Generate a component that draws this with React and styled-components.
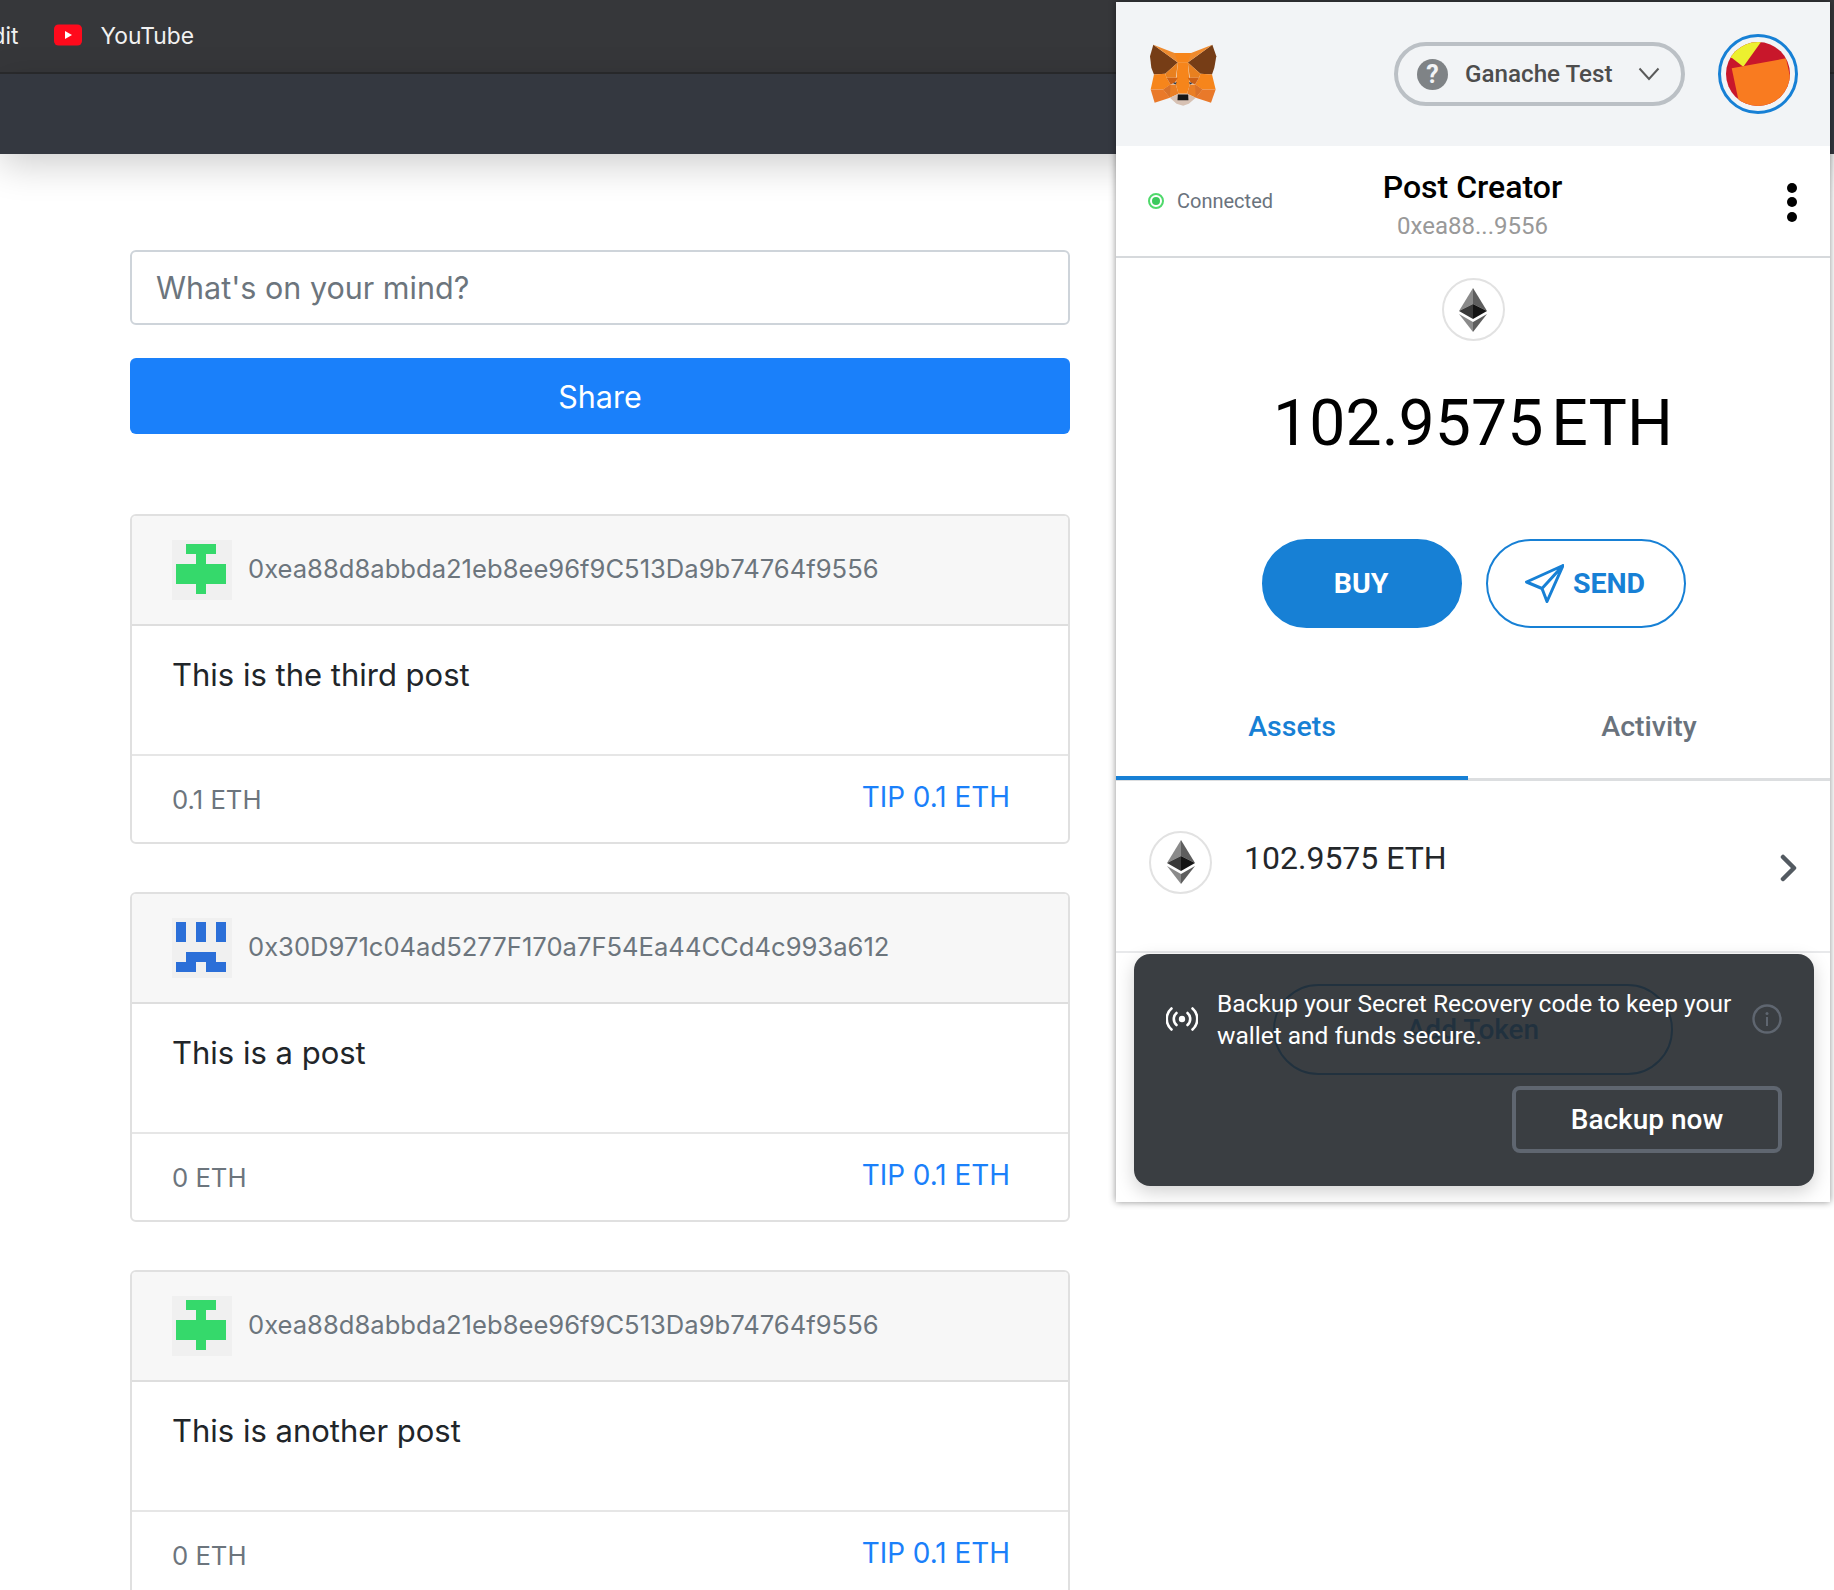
import React from "react";
import styled, { createGlobalStyle } from "styled-components";

const Global = createGlobalStyle`
  html, body { margin: 0; padding: 0; background: #fff; }
  body { width: 1834px; height: 1590px; overflow: hidden; font-family: Inter, "Liberation Sans", sans-serif; }
  * { box-sizing: border-box; }
`;

const Page = styled.div`position: relative; width: 1834px; height: 1590px; overflow: hidden; background: #fff;`;
const BookmarksBar = styled.div`
  height: 74px; background: #36373a; border-bottom: 2px solid #2a2b2d;
  display: flex; align-items: center; gap: 35px; margin-left: -50px; padding-bottom: 2px;
`;
const Bookmark = styled.div`display: flex; align-items: center; gap: 19px; color: #f1f1f1; font-size: 22.8px; white-space: nowrap;`;
const NavBar = styled.div`height: 80px; background: #343840; box-shadow: 0 10px 38px rgba(0,0,0,.2); position: relative;`;
const Feed = styled.main`width: 940px; margin-left: 130px; padding-top: 96px; display: flex; flex-direction: column;`;
const PostInput = styled.div`
  height: 75px; border: 2px solid #ced4da; border-radius: 6px; padding-left: 24px;
  display: flex; align-items: center; color: #6c757d; font-size: 30.5px;
`;
const ShareButton = styled.div`
  height: 76px; margin-top: 33px; margin-bottom: 80px; background: #1a80fa; border-radius: 6px; color: #fff;
  display: flex; align-items: center; justify-content: center; font-size: 30.5px;
`;
const Card = styled.article`
  height: 330px; margin-bottom: 48px; border: 2px solid #e0e0e0; border-radius: 6px; overflow: hidden; flex-shrink: 0;
  display: flex; flex-direction: column;
`;
const CardHeader = styled.header`
  height: 110px; background: #f7f7f7; border-bottom: 2px solid #dedede; padding-left: 40px;
  display: flex; align-items: center; gap: 16px; flex-shrink: 0;
`;
const Address = styled.span`color: #6c757d; font-size: 25.6px; white-space: nowrap; margin-top: -3px;`;
const CardBody = styled.div`height: 130px; padding: 30px 40px 0; font-size: 31px; color: #212529; border-bottom: 2px solid #e6e6e6; flex-shrink: 0;`;
const CardFooter = styled.footer`flex: 1; display: flex; align-items: center; justify-content: space-between; padding: 0 58px 0 40px;`;
const Amount = styled.span`color: #6c757d; font-size: 25.7px;`;
const TipLink = styled.span`color: #1a80fa; font-size: 27.9px; padding-bottom: 5px;`;

const Popup = styled.aside`
  position: absolute; top: 2px; left: 1116px; width: 714px; height: 1200px; background: #fff;
  box-shadow: 0 0 7px rgba(0,0,0,.45); font-family: Roboto, "Liberation Sans", sans-serif;
  display: flex; flex-direction: column;
`;
const PopupHeader = styled.header`
  height: 144px; background: #f2f4f6; flex-shrink: 0; padding: 0 32px 0 33px;
  display: flex; align-items: center; justify-content: space-between;
`;
const HeaderRight = styled.div`display: flex; align-items: center; gap: 33px;`;
const NetworkPill = styled.div`
  width: 291px; height: 64px; border: 4px solid #bbc0c5; border-radius: 32px; padding-left: 19px;
  display: flex; align-items: center; color: #4d4d4d; font-size: 24.2px; font-weight: 500;
`;
const HelpDot = styled.span`
  width: 31px; height: 31px; border-radius: 50%; background: #7f8386; color: #f2f4f6; font-size: 25px; font-weight: 700;
  display: flex; align-items: center; justify-content: center; margin-right: 17px; flex-shrink: 0;
`;
const ChevronWrap = styled.span`margin-left: 25px; display: flex;`;
const AccountRow = styled.div`
  height: 112px; border-bottom: 2px solid #d6d9dc; flex-shrink: 0; position: relative; padding: 0 33px 0 32px;
  display: grid; grid-template-columns: 1fr auto 1fr; align-items: center;
`;
const ConnectedStatus = styled.div`display: flex; align-items: center; gap: 13px; color: #6a737d; font-size: 20px;`;
const StatusDot = styled.span`
  width: 16px; height: 16px; border-radius: 50%; border: 2px solid #4fd96b; display: flex; align-items: center; justify-content: center;
  &::after { content: ""; width: 8px; height: 8px; border-radius: 50%; background: #3cc95c; }
`;
const AccountInfo = styled.div`display: flex; flex-direction: column; align-items: center; gap: 7px; padding-top: 6px;`;
const AccountName = styled.div`font-size: 32px; font-weight: 500; color: #000; line-height: 36px;`;
const AccountAddress = styled.div`font-size: 24px; color: #999; line-height: 28px;`;
const Kebab = styled.div`
  justify-self: end; display: flex; flex-direction: column; gap: 4.5px; padding-top: 2px;
  span { width: 10px; height: 10px; border-radius: 50%; background: #000; display: block; }
`;
const Balance = styled.section`display: flex; flex-direction: column; align-items: center; flex-shrink: 0; padding-top: 20px;`;
const TokenCircle = styled.div`
  width: 63px; height: 63px; border-radius: 50%; border: 2px solid #e2e2e2; display: flex; align-items: center; justify-content: center; background: #fff; flex-shrink: 0;
`;
const BalanceText = styled.div`font-size: 64.4px; color: #000; line-height: 80px; margin-top: 42px; word-spacing: -8px;`;
const Actions = styled.div`display: flex; gap: 24px; margin-top: 76px; margin-left: 2px;`;
const ActionButton = styled.div`
  width: 200px; height: 89px; border-radius: 45px; border: 2px solid #1780d5; font-size: 28.5px; font-weight: 700;
  display: flex; align-items: center; justify-content: center; gap: 9px; padding-right: 2px;
  background: ${p => (p.$filled ? "#1780d5" : "#fff")}; color: ${p => (p.$filled ? "#fff" : "#1780d5")};
`;
const Tabs = styled.nav`display: grid; grid-template-columns: 352px 1fr; margin-top: 51px; height: 102px; flex-shrink: 0; border-bottom: 3px solid #dcdee0;`;
const Tab = styled.div`
  height: 101px; font-size: 28.5px; font-weight: 500; display: flex; align-items: center; justify-content: center;
  padding-bottom: ${p => (p.$active ? "3px" : "6px")};
  color: ${p => (p.$active ? "#1780d5" : "#6a737d")};
  border-bottom: ${p => (p.$active ? "4px solid #1780d5" : "none")};
`;
const AssetRow = styled.div`
  height: 172px; border-bottom: 2px solid #e8e9eb; flex-shrink: 0; display: flex; align-items: center; padding: 0 32px 8px 33px; gap: 32px;
`;
const AssetAmount = styled.div`font-size: 32px; color: #24272a; flex: 1; margin-top: -9px;`;
const RowChevronWrap = styled.div`margin-top: 12px; display: flex;`;
const AddToken = styled.div`
  width: 400px; height: 91px; margin: 31px auto 0; border: 2px solid #037dd6; border-radius: 46px; color: #037dd6;
  display: flex; align-items: center; justify-content: center; font-size: 28px; font-weight: 500;
`;
const Toast = styled.div`
  position: absolute; left: 18px; top: 952px; width: 680px; height: 232px; border-radius: 16px; background: rgba(37,41,46,.9);
  box-shadow: 0 6px 18px rgba(0,0,0,.18); padding: 34px 32px 32px 32px; color: #fff; display: flex; flex-direction: column;
`;
const ToastTop = styled.div`display: flex; align-items: center; gap: 19px;`;
const ToastIcon = styled.span`display: flex; flex-shrink: 0; margin-top: -3px;`;
const ToastText = styled.div`font-size: 24.5px; line-height: 32px; flex: 1; white-space: pre-line;`;
const ToastAction = styled.div`
  align-self: flex-end; margin-top: 34px; width: 270px; height: 67px; border: 4px solid #5f6670; border-radius: 8px;
  display: flex; align-items: center; justify-content: center; font-size: 28px; font-weight: 500;
`;

const Cells = ({ cells, color }) => (
  <svg width="60" height="60" viewBox="0 0 60 60" style={{ flexShrink: 0 }}>
    <rect width="60" height="60" fill="#f0f0f0" />
    {cells.map((c, i) => <rect key={i} x={c[0]} y={c[1]} width={c[2]} height={c[3]} fill={color} />)}
  </svg>
);
const GREEN = [[14, 4, 30, 10], [24, 14, 10, 10], [4, 24, 50, 20], [24, 44, 10, 10]];
const BLUE = [[4, 4, 10, 20], [24, 4, 10, 20], [44, 4, 10, 20], [14, 34, 30, 10], [4, 44, 20, 10], [34, 44, 20, 10]];

const YouTubeIcon = () => (
  <svg width="28" height="22" viewBox="0 0 28 22">
    <rect width="28" height="21" y="0.5" rx="4.5" fill="#ff0a1c" />
    <path d="M11 7l7 4-7 4z" fill="#fff" />
  </svg>
);

const Fox = () => (
  <svg width="68" height="63" viewBox="55 65 205 190" style={{ flexShrink: 0 }}>
    <polygon points="68,70 142,124 104,158 70,160 62,140 58,105" fill="#763d16" />
    <polygon points="246,70 172,124 210,158 245,160 252,140 258,105" fill="#763d16" />
    <polygon points="68,70 132,95 182,95 246,70 172,124 142,124" fill="#ee8a2e" />
    <polygon points="132,95 182,95 172,124 142,124" fill="#f6851b" />
    <polygon points="142,124 172,124 178,190 170,218 144,218 136,190" fill="#f6851b" />
    <polygon points="142,124 104,158 108,170 136,170" fill="#e8801f" />
    <polygon points="172,124 210,158 206,170 178,170" fill="#e8801f" />
    <polygon points="70,160 104,158 108,170 120,190 98,205 60,205" fill="#f6851b" />
    <polygon points="245,160 210,158 206,170 194,190 216,205 256,205" fill="#f6851b" />
    <polygon points="108,170 142,170 133,185 120,190" fill="#cd6116" />
    <polygon points="206,170 172,170 181,185 194,190" fill="#cd6116" />
    <polygon points="120,190 136,190 144,218 118,230 98,205" fill="#ea7f25" />
    <polygon points="194,190 178,190 170,218 196,230 216,205" fill="#ea7f25" />
    <polygon points="120,190 98,205 118,230" fill="#d9722a" />
    <polygon points="194,190 216,205 196,230" fill="#d9722a" />
    <polygon points="60,205 72,245 118,230 98,205" fill="#e9792a" />
    <polygon points="256,205 242,245 196,230 216,205" fill="#e9792a" />
    <polygon points="118,230 144,218 170,218 196,230 175,248 158,254 138,248" fill="#d7c1b3" />
    <polygon points="142,220 173,220 174,238 141,238" fill="#161616" />
    <polygon points="127,186 139,183 135,190" fill="#233447" />
    <polygon points="187,186 175,183 179,190" fill="#233447" />
  </svg>
);

const Chevron = () => (
  <svg width="22" height="14" viewBox="0 0 22 14">
    <path d="M1.5 1.5L11 12l9.5-10.5" fill="none" stroke="#5a5a5a" strokeWidth="2" />
  </svg>
);

const Identity = () => (
  <svg width="80" height="80" viewBox="0 0 80 80" style={{ flexShrink: 0 }}>
    <defs><clipPath id="idc"><circle cx="32" cy="32" r="32" /></clipPath></defs>
    <circle cx="40" cy="40" r="38.5" fill="none" stroke="#1780d5" strokeWidth="3" />
    <g transform="translate(8 8)" clipPath="url(#idc)">
      <rect width="64" height="64" fill="#c8172b" />
      <polygon points="17.3,24.7 5,15.3 0,0 35,-5 35,0" fill="#ecf02f" />
      <polygon points="5.7,26.3 60,16.3 72,70 15,70" fill="#f97b20" />
    </g>
  </svg>
);

const EthLogo = () => (
  <svg width="28" height="44" viewBox="0 0 28 44">
    <polygon points="14,0 0,23 14,16" fill="#8a8a8a" />
    <polygon points="14,0 28,23 14,16" fill="#5e5e5e" />
    <polygon points="0,23 14,16 14,31" fill="#393939" />
    <polygon points="28,23 14,16 14,31" fill="#141414" />
    <polygon points="0,26 14,34 14,44" fill="#8a8a8a" />
    <polygon points="28,26 14,34 14,44" fill="#5e5e5e" />
  </svg>
);

const SendIcon = () => (
  <svg width="39" height="39" viewBox="0 0 39 39">
    <path d="M38 1.5L1.5 18 17 24.5 22 37.5zM38 1.5L17 24.5" fill="none" stroke="#1780d5" strokeWidth="3" strokeLinejoin="round" strokeLinecap="round" />
  </svg>
);

const RowChevron = () => (
  <svg width="18" height="28" viewBox="0 0 18 28">
    <path d="M3 3l11 11L3 25" fill="none" stroke="#535a61" strokeWidth="4.5" strokeLinecap="round" strokeLinejoin="round" />
  </svg>
);

const Broadcast = () => (
  <svg width="32" height="24" viewBox="0 0 32 24">
    <circle cx="16" cy="12" r="3.2" fill="#fff" />
    <g fill="none" stroke="#fff" strokeWidth="2.6" strokeLinecap="round">
      <path d="M10.5 6a8 8 0 0 0 0 12" />
      <path d="M21.5 6a8 8 0 0 1 0 12" />
      <path d="M5.5 1.5a14 14 0 0 0 0 21" />
      <path d="M26.5 1.5a14 14 0 0 1 0 21" />
    </g>
  </svg>
);

const InfoIcon = () => (
  <svg width="30" height="30" viewBox="0 0 30 30">
    <circle cx="15" cy="15" r="13.5" fill="none" stroke="#5f6670" strokeWidth="2.4" />
    <circle cx="15" cy="9.5" r="1.5" fill="#5f6670" />
    <rect x="14" y="13" width="2" height="9" fill="#5f6670" />
  </svg>
);

const posts = [
  { cells: GREEN, color: "#35d96b", address: "0xea88d8abbda21eb8ee96f9C513Da9b74764f9556", text: "This is the third post", amount: "0.1 ETH" },
  { cells: BLUE, color: "#2b6fd8", address: "0x30D971c04ad5277F170a7F54Ea44CCd4c993a612", text: "This is a post", amount: "0 ETH" },
  { cells: GREEN, color: "#35d96b", address: "0xea88d8abbda21eb8ee96f9C513Da9b74764f9556", text: "This is another post", amount: "0 ETH" },
];

export default function App() {
  return (
    <Page>
      <Global />
      <BookmarksBar>
        <Bookmark>Reddit</Bookmark>
        <Bookmark><YouTubeIcon />YouTube</Bookmark>
      </BookmarksBar>
      <NavBar />
      <Feed>
        <PostInput>What's on your mind?</PostInput>
        <ShareButton>Share</ShareButton>
        {posts.map((p, i) => (
          <Card key={i}>
            <CardHeader>
              <Cells cells={p.cells} color={p.color} />
              <Address>{p.address}</Address>
            </CardHeader>
            <CardBody>{p.text}</CardBody>
            <CardFooter>
              <Amount>{p.amount}</Amount>
              <TipLink>TIP 0.1 ETH</TipLink>
            </CardFooter>
          </Card>
        ))}
      </Feed>
      <Popup>
        <PopupHeader>
          <Fox />
          <HeaderRight>
            <NetworkPill>
              <HelpDot>?</HelpDot>
              Ganache Test
              <ChevronWrap><Chevron /></ChevronWrap>
            </NetworkPill>
            <Identity />
          </HeaderRight>
        </PopupHeader>
        <AccountRow>
          <ConnectedStatus><StatusDot />Connected</ConnectedStatus>
          <AccountInfo>
            <AccountName>Post Creator</AccountName>
            <AccountAddress>0xea88...9556</AccountAddress>
          </AccountInfo>
          <Kebab><span /><span /><span /></Kebab>
        </AccountRow>
        <Balance>
          <TokenCircle><EthLogo /></TokenCircle>
          <BalanceText>102.9575 ETH</BalanceText>
          <Actions>
            <ActionButton $filled>BUY</ActionButton>
            <ActionButton><SendIcon />SEND</ActionButton>
          </Actions>
        </Balance>
        <Tabs>
          <Tab $active>Assets</Tab>
          <Tab>Activity</Tab>
        </Tabs>
        <AssetRow>
          <TokenCircle><EthLogo /></TokenCircle>
          <AssetAmount>102.9575 ETH</AssetAmount>
          <RowChevronWrap><RowChevron /></RowChevronWrap>
        </AssetRow>
        <AddToken>Add Token</AddToken>
        <Toast>
          <ToastTop>
            <ToastIcon><Broadcast /></ToastIcon>
            <ToastText>{"Backup your Secret Recovery code to keep your\nwallet and funds secure."}</ToastText>
            <ToastIcon><InfoIcon /></ToastIcon>
          </ToastTop>
          <ToastAction>Backup now</ToastAction>
        </Toast>
      </Popup>
    </Page>
  );
}
